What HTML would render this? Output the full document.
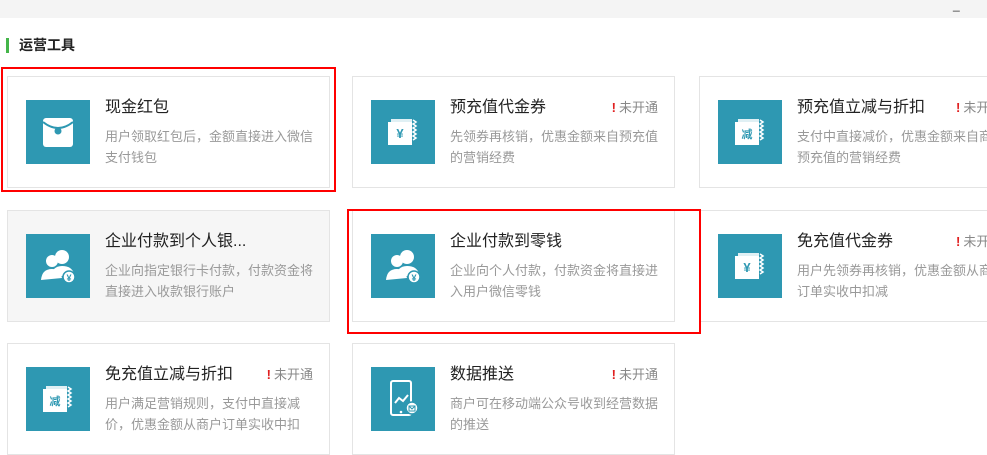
<!DOCTYPE html>
<html><head><meta charset="utf-8"><style>
*{margin:0;padding:0;box-sizing:border-box}
body{width:987px;height:455px;overflow:hidden;background:#fff;font-family:"Liberation Sans","Noto Sans CJK SC",sans-serif;position:relative}
.top{position:absolute;left:0;top:0;width:987px;height:18px;background:#f4f4f4}
.dash{position:absolute;left:953px;top:-2px;font-size:12px;color:#333}
.hbar{position:absolute;left:6px;top:38px;width:3px;height:15px;background:#44b549}
.h{position:absolute;left:19px;top:36px;font-size:14px;font-weight:bold;color:#222;line-height:18px}
.card{position:absolute;width:323px;height:112px;border:1px solid #e4e4e4;background:#fff}
.card.g{background:#f6f6f6}
.ic{position:absolute;left:18px;top:23px;width:64px;height:64px;background:#2e98b2}
.ic svg{width:64px;height:64px;display:block}
.t{position:absolute;left:97px;top:21px;font-size:16px;color:#222;line-height:20px;white-space:nowrap}
.d{position:absolute;left:97px;top:49px;width:212px;font-size:13px;color:#999;line-height:21px}
.b{position:absolute;right:16px;top:22px;font-size:13px;color:#888;line-height:18px;white-space:nowrap}
.b i{font-style:normal;color:#e02020;font-weight:bold;margin-right:3px}
.red{position:absolute;border:2px solid #f00}
</style></head><body>
<div class="top"></div><div class="dash">_</div>
<div class="hbar"></div><div class="h">运营工具</div>

<div class="card" style="left:7px;top:76px">
<div class="ic"><svg viewBox="0 0 64 64"><rect x="17" y="18" width="30" height="29" rx="3" fill="#fff"/><path d="M17 22 Q32 34 47 22" stroke="#2e98b2" stroke-width="2" fill="none"/><circle cx="32" cy="31" r="3.5" fill="#2e98b2"/></svg></div>
<div class="t">现金红包</div><div class="d">用户领取红包后，金额直接进入微信支付钱包</div></div>

<div class="card" style="left:352px;top:76px">
<div class="ic"><svg viewBox="0 0 64 64"><rect x="20" y="19" width="21" height="23" fill="#fff" opacity=".85"/><rect x="17" y="22" width="24" height="23" fill="#fff"/><path d="M42 20 l3 2 -3 2 3 2 -3 2 3 2 -3 2 3 2 -3 2 3 2 -3 2" stroke="#fff" stroke-width="1.5" fill="none"/><text x="29" y="38" font-size="13" font-weight="bold" fill="#2e98b2" text-anchor="middle" font-family="Liberation Sans">¥</text></svg></div>
<div class="t">预充值代金券</div><div class="b"><i>!</i>未开通</div><div class="d">先领券再核销，优惠金额来自预充值的营销经费</div></div>

<div class="card" style="left:699px;top:76px">
<div class="ic"><svg viewBox="0 0 64 64"><rect x="20" y="19" width="21" height="23" fill="#fff" opacity=".85"/><rect x="17" y="22" width="24" height="23" fill="#fff"/><path d="M42 20 l3 2 -3 2 3 2 -3 2 3 2 -3 2 3 2 -3 2 3 2 -3 2" stroke="#fff" stroke-width="1.5" fill="none"/><text x="29" y="38" font-size="11" font-weight="bold" fill="#2e98b2" text-anchor="middle" font-family="Noto Sans CJK SC">减</text></svg></div>
<div class="t">预充值立减与折扣</div><div class="b" style="right:auto;left:256px"><i>!</i>未开通</div><div class="d" style="width:240px;white-space:nowrap">支付中直接减价，优惠金额来自商户<br>预充值的营销经费</div></div>

<div class="card g" style="left:7px;top:210px">
<div class="ic"><svg viewBox="0 0 64 64"><circle cx="36" cy="23" r="7" fill="#fff"/><path d="M24 44 q2-12 12-12 q10 0 12 8" fill="#fff"/><circle cx="26" cy="27" r="6" fill="#fff"/><path d="M15 46 q1-11 11-11 q8 0 10 9" fill="#fff"/><circle cx="43" cy="43" r="6" fill="#fff" stroke="#2e98b2" stroke-width="1.5"/><text x="43" y="47" font-size="9" fill="#2e98b2" text-anchor="middle" font-weight="bold">¥</text></svg></div>
<div class="t">企业付款到个人银...</div><div class="d">企业向指定银行卡付款，付款资金将直接进入收款银行账户</div></div>

<div class="card" style="left:352px;top:210px">
<div class="ic"><svg viewBox="0 0 64 64"><circle cx="36" cy="23" r="7" fill="#fff"/><path d="M24 44 q2-12 12-12 q10 0 12 8" fill="#fff"/><circle cx="26" cy="27" r="6" fill="#fff"/><path d="M15 46 q1-11 11-11 q8 0 10 9" fill="#fff"/><circle cx="43" cy="43" r="6" fill="#fff" stroke="#2e98b2" stroke-width="1.5"/><text x="43" y="47" font-size="9" fill="#2e98b2" text-anchor="middle" font-weight="bold">¥</text></svg></div>
<div class="t">企业付款到零钱</div><div class="d">企业向个人付款，付款资金将直接进入用户微信零钱</div></div>

<div class="card" style="left:699px;top:210px">
<div class="ic"><svg viewBox="0 0 64 64"><rect x="20" y="19" width="21" height="23" fill="#fff" opacity=".85"/><rect x="17" y="22" width="24" height="23" fill="#fff"/><path d="M42 20 l3 2 -3 2 3 2 -3 2 3 2 -3 2 3 2 -3 2 3 2 -3 2" stroke="#fff" stroke-width="1.5" fill="none"/><text x="29" y="38" font-size="13" font-weight="bold" fill="#2e98b2" text-anchor="middle" font-family="Liberation Sans">¥</text></svg></div>
<div class="t">免充值代金券</div><div class="b" style="right:auto;left:256px"><i>!</i>未开通</div><div class="d" style="width:240px;white-space:nowrap">用户先领券再核销，优惠金额从商户<br>订单实收中扣减</div></div>

<div class="card" style="left:7px;top:343px">
<div class="ic"><svg viewBox="0 0 64 64"><rect x="20" y="19" width="21" height="23" fill="#fff" opacity=".85"/><rect x="17" y="22" width="24" height="23" fill="#fff"/><path d="M42 20 l3 2 -3 2 3 2 -3 2 3 2 -3 2 3 2 -3 2 3 2 -3 2" stroke="#fff" stroke-width="1.5" fill="none"/><text x="29" y="38" font-size="11" font-weight="bold" fill="#2e98b2" text-anchor="middle" font-family="Noto Sans CJK SC">减</text></svg></div>
<div class="t">免充值立减与折扣</div><div class="b"><i>!</i>未开通</div><div class="d">用户满足营销规则，支付中直接减价，优惠金额从商户订单实收中扣</div></div>

<div class="card" style="left:352px;top:343px">
<div class="ic"><svg viewBox="0 0 64 64"><rect x="20" y="14" width="20" height="34" rx="2" fill="none" stroke="#fff" stroke-width="2"/><path d="M24 36 l4-5 4 3 5-6" stroke="#fff" stroke-width="2" fill="none"/><circle cx="30" cy="45" r="1.3" fill="#fff"/><circle cx="41" cy="41" r="6" fill="#fff" stroke="#2e98b2" stroke-width="1.5"/><path d="M38 39 h6 v5 h-6z M38 39 l3 3 3-3" stroke="#2e98b2" stroke-width="1" fill="none"/></svg></div>
<div class="t">数据推送</div><div class="b"><i>!</i>未开通</div><div class="d">商户可在移动端公众号收到经营数据的推送</div></div>

<div class="red" style="left:1px;top:67px;width:335px;height:125px"></div>
<div class="red" style="left:347px;top:209px;width:354px;height:125px"></div>
</body></html>
